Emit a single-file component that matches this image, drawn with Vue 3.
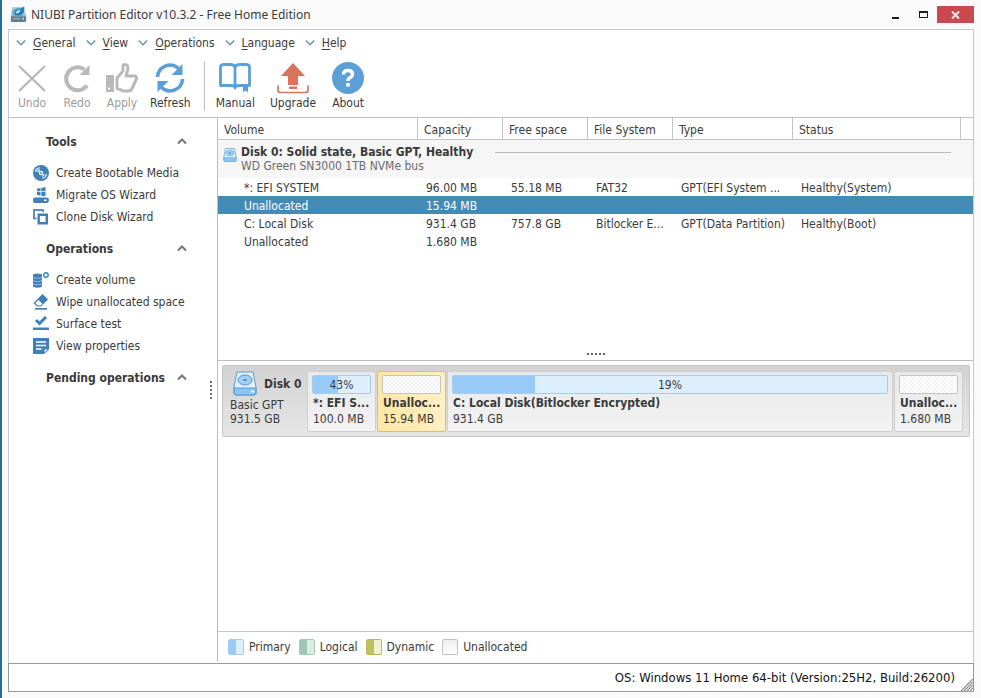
<script setup>
import { ref } from 'vue'

const menus = ['General', 'View', 'Operations', 'Language', 'Help']

const columns = ['Volume', 'Capacity', 'Free space', 'File System', 'Type', 'Status', '']
const volumes = [
  ['*: EFI SYSTEM', '96.00 MB', '55.18 MB', 'FAT32', 'GPT(EFI System ...', 'Healthy(System)', ''],
  ['Unallocated', '15.94 MB', '', '', '', '', ''],
  ['C: Local Disk', '931.4 GB', '757.8 GB', 'Bitlocker E...', 'GPT(Data Partition)', 'Healthy(Boot)', ''],
  ['Unallocated', '1.680 MB', '', '', '', '', '']
]
const selected = ref(1)

const partitions = [
  { name: '*: EFI S...', size: '100.0 MB', used: 43 },
  { name: 'Unalloc...', size: '15.94 MB' },
  { name: 'C: Local Disk(Bitlocker Encrypted)', size: '931.4 GB', used: 19, wide: true },
  { name: 'Unalloc...', size: '1.680 MB' }
]

const legend = [
  { label: 'Primary', kind: 'primary' },
  { label: 'Logical', kind: 'logical' },
  { label: 'Dynamic', kind: 'dynamic' },
  { label: 'Unallocated', kind: 'free' }
]
</script>

<template>
  <div class="window">
    <header class="titlebar">
      <svg class="app-icon" width="17" height="17" viewBox="0 0 18 18">
        <path d="M3 1h11l3 9v5q0 2-2 2H3q-2 0-2-2v-5z" fill="#7f99a8" />
        <path d="M3 1h11l3 9H1z" fill="#b8cfdb" />
        <path d="M1 11.500h16V15q0 2-2 2H3q-2 0-2-2z" fill="#5f7d90" />
        <ellipse cx="8.500" cy="6.500" rx="6" ry="4.500" fill="#58a9d4" />
        <path d="M5 9q-1-5 6-6l4-2.500q1.500 6.500-4 9-3 1-6-.5z" fill="#2380b4" />
        <path d="M6 7.500q2-3.500 5-3.500-1 4.500-5 3.500z" fill="#d9f2ff" />
        <path d="M3 13.500h8" stroke="#a9bfcc" />
        <circle cx="14" cy="13.500" r="1" fill="#c5e8f7" />
      </svg>
      <h1>NIUBI Partition Editor v10.3.2 - Free Home Edition</h1>
      <div class="controls">
        <button class="ctl" aria-label="Minimize">
          <svg width="9" height="11" viewBox="0 0 9 11"><path d="M1 8h7v2H1z" fill="#1b1b1b" /></svg>
        </button>
        <button class="ctl" aria-label="Maximize">
          <svg width="9" height="7" viewBox="0 0 9 7"><path d="M0 0h9v7H0zM1 2v4h7V2z" fill="#1b1b1b" fill-rule="evenodd" /></svg>
        </button>
        <button class="ctl close" aria-label="Close">
          <svg width="9" height="8" viewBox="0 0 9 8"><path d="M1 .5l7 7M8 .5l-7 7" stroke="#fbe9e9" stroke-width="2" /></svg>
        </button>
      </div>
    </header>

    <div class="frame">
      <nav class="menubar">
        <button v-for="m in menus" :key="m" class="menu">
          <svg width="10" height="7" viewBox="0 0 10 7"><path d="M.8 .5L5 4.800 9.200 .5" fill="none" stroke="#6f97a8" stroke-width="1.500" /></svg>
          <span><u>{{ m[0] }}</u>{{ m.slice(1) }}</span>
        </button>
      </nav>

      <div class="toolbar">
        <button class="tool" disabled>
          <svg width="34" height="34" viewBox="0 0 34 34"><path d="M4 5l26 25M30 5L4 30" stroke="#b9b9b9" stroke-width="2.400" /></svg>
          <span>Undo</span>
        </button>
        <button class="tool" disabled>
          <svg width="34" height="34" viewBox="0 0 34 34">
            <path d="M27 24.500A11.500 11.500 0 1 1 24.500 8.500" fill="none" stroke="#b9b9b9" stroke-width="4" />
            <path d="M29.500 4v10H19.500z" fill="#b9b9b9" />
          </svg>
          <span>Redo</span>
        </button>
        <button class="tool" disabled>
          <svg width="34" height="34" viewBox="0 0 34 34">
            <path d="M1 14h8v17H1zM3 26.500v2h2v-2z" fill="#b9b9b9" fill-rule="evenodd" />
            <path d="M12 27.500V17l6-7V4.500q0-1 2-1 3 0 3 4.500l-2 7h9q2.500 1 1 4l-4 8.500q-.8 2.500-3 2.500h-6q-2-1.500-6-2.500z" fill="none" stroke="#b9b9b9" stroke-width="3" stroke-linejoin="round" />
          </svg>
          <span>Apply</span>
        </button>
        <button class="tool">
          <svg width="34" height="34" viewBox="0 0 34 34">
            <path d="M4.500 16A12.500 12.500 0 0 1 25.500 7.500M29.500 18A12.500 12.500 0 0 1 8.500 26.500" fill="none" stroke="#5b9fd6" stroke-width="3.600" />
            <path d="M29.500 3v11H18.500zM4.500 31V20h11z" fill="#5b9fd6" />
          </svg>
          <span>Refresh</span>
        </button>
        <div class="separator"></div>
        <div class="tool-group">
          <button class="tool">
            <svg width="34" height="34" viewBox="0 0 34 34">
              <path d="M2.500 24.500V6q0-2.500 4-2.500h5q5.500 0 5.500 3.500 0-3.500 5.500-3.500h5q4 0 4 2.500v18.500h-9q-5.500 0-5.500 2.500 0-2.500-5.500-2.500zM17 7v20" fill="none" stroke="#5b9fd6" stroke-width="2.800" stroke-linejoin="round" />
              <path d="M25 25h5v6.500l-2.500-2-2.500 2z" fill="#5b9fd6" />
            </svg>
            <span>Manual</span>
          </button>
          <button class="tool">
            <svg width="34" height="34" viewBox="0 0 34 34">
              <path d="M17 2l12 13h-7v9H12v-9H5zM13 25.500h8v2.500h-8z" fill="#d9735c" />
              <path d="M2 24.500v4.500q0 2.500 2.500 2.500h25q2.500 0 2.500-2.500v-4.500" fill="none" stroke="#d9735c" stroke-width="1.700" />
            </svg>
            <span>Upgrade</span>
          </button>
          <button class="tool">
            <svg width="34" height="34" viewBox="0 0 34 34">
              <circle cx="17" cy="17" r="16" fill="#5b9fd6" />
              <path d="M12.500 13.500q0-4 4.500-4t4.500 3.700q0 2-2.300 3.400-2.200 1.200-2.200 3.400" fill="none" stroke="#fff" stroke-width="3.400" />
              <path d="M15.200 22h3.600v3.600h-3.600z" fill="#fff" />
            </svg>
            <span>About</span>
          </button>
        </div>
      </div>

      <div class="body">
        <aside class="sidebar">
          <section>
            <button class="group"><span>Tools</span><svg width="10" height="8" viewBox="0 0 10 8"><path d="M1 5.500L5 1.500l4 4" fill="none" stroke="#757575" stroke-width="2" /></svg></button>
            <ul>
              <li><button class="action">
                <svg width="16" height="16" viewBox="0 0 16 16">
                  <circle cx="8" cy="8" r="8" fill="#3d80ba" />
                  <circle cx="8" cy="8" r="2.200" fill="#fff" /><circle cx="8" cy="8" r=".9" fill="#3d80ba" />
                  <path d="M2.500 7A5.500 5.500 0 0 1 6.500 2.600M4.600 7.200A3.500 3.500 0 0 1 7 4.700M13.500 9A5.500 5.500 0 0 1 9.500 13.400M11.400 8.800A3.500 3.500 0 0 1 9 11.300" fill="none" stroke="#e6f1fa" stroke-width="1.200" />
                </svg>
                <span>Create Bootable Media</span>
              </button></li>
              <li><button class="action">
                <svg width="16" height="16" viewBox="0 0 16 16">
                  <path d="M4 1.800L7.500 1v3.200H4zM8.300.9L12.500 0v4.200H8.300zM4 5h3.500v3.600L4 8zM8.300 5h4.200v4.300l-4.200-.6z" fill="#3d80ba" />
                  <path d="M2 10.500h12q2 0 2 2.700T14 16H2q-2 0-2-2.800t2-2.700zM11 12.500v1.500h2.500v-1.500z" fill="#3d80ba" fill-rule="evenodd" />
                </svg>
                <span>Migrate OS Wizard</span>
              </button></li>
              <li><button class="action">
                <svg width="16" height="16" viewBox="0 0 16 16">
                  <path d="M3.500 9.500H1V1h9v2" fill="none" stroke="#5c91bf" stroke-width="2" />
                  <path d="M5.700 5.700h8.100v8.600H5.700z" fill="#fff" stroke="#3d80ba" stroke-width="2.400" />
                </svg>
                <span>Clone Disk Wizard</span>
              </button></li>
            </ul>
          </section>
          <section>
            <button class="group"><span>Operations</span><svg width="10" height="8" viewBox="0 0 10 8"><path d="M1 5.500L5 1.500l4 4" fill="none" stroke="#757575" stroke-width="2" /></svg></button>
            <ul>
              <li><button class="action">
                <svg width="16" height="16" viewBox="0 0 16 16">
                  <path d="M0 3q0-1.500 4.500-1.500T9 3v11q0 1.700-4.500 1.700T0 14z" fill="#3d80ba" />
                  <path d="M0 5.500q4.500 1.800 9 0M0 8.800q4.500 1.800 9 0M0 12q4.500 1.800 9 0" fill="none" stroke="#a9cae5" stroke-width=".8" />
                  <circle cx="13" cy="3" r="2.200" fill="#fff" stroke="#3d80ba" stroke-width="1.400" />
                </svg>
                <span>Create volume</span>
              </button></li>
              <li><button class="action">
                <svg width="16" height="16" viewBox="0 0 16 16">
                  <path d="M9.500 0L15 5.500 8 12.500H4L.5 9z" fill="#3d80ba" />
                  <path d="M5.500 6l4 4-2 1.500H4.600L2.300 9z" fill="#fff" />
                  <path d="M2 14h12v1.700H2z" fill="#3d80ba" />
                </svg>
                <span>Wipe unallocated space</span>
              </button></li>
              <li><button class="action">
                <svg width="16" height="16" viewBox="0 0 16 16">
                  <path d="M3 4l3.500 3.500L13 1" fill="none" stroke="#3d80ba" stroke-width="3" />
                  <path d="M0 11.500h16V14H0z" fill="#3d80ba" />
                </svg>
                <span>Surface test</span>
              </button></li>
              <li><button class="action">
                <svg width="16" height="16" viewBox="0 0 16 16">
                  <path d="M0 0h16v11l-5 5H0z" fill="#3d80ba" />
                  <path d="M3 4h10M3 7.500h10M3 11h5.500" stroke="#fff" stroke-width="1.400" />
                  <path d="M11 15.500V11h4.500z" fill="#fff" stroke="#3d80ba" />
                </svg>
                <span>View properties</span>
              </button></li>
            </ul>
          </section>
          <section>
            <button class="group"><span>Pending operations</span><svg width="10" height="8" viewBox="0 0 10 8"><path d="M1 5.500L5 1.500l4 4" fill="none" stroke="#757575" stroke-width="2" /></svg></button>
          </section>
          <svg class="grip" width="2" height="18" viewBox="0 0 2 18"><path d="M1 0v18" stroke="#6e6e6e" stroke-width="2" stroke-dasharray="2 2" /></svg>
        </aside>

        <main class="content">
          <div class="list">
            <table>
              <colgroup>
                <col class="c-volume" /><col class="c-short" /><col class="c-short" /><col class="c-short" />
                <col class="c-type" /><col class="c-status" /><col />
              </colgroup>
              <thead>
                <tr><th v-for="(c, i) in columns" :key="i" scope="col">{{ c }}</th></tr>
              </thead>
              <tbody>
                <tr class="disk-row">
                  <td colspan="7">
                    <div class="disk-head">
                      <svg width="14" height="14" viewBox="0 0 24 25">
                        <path d="M4 1h16l3 15v6q0 2-2 2H3q-2 0-2-2v-6z" fill="#e4f2fd" stroke="#6fa9da" stroke-width="1.600" />
                        <path d="M1 17h22v5q0 2-2 2H3q-2 0-2-2z" fill="#8cc4f3" stroke="#6fa9da" />
                        <ellipse cx="12" cy="9" rx="7" ry="5" fill="#a4d0f5" stroke="#5e9fd3" />
                        <ellipse cx="12" cy="9" rx="2" ry="1.500" fill="#4f92c9" />
                      </svg>
                      <div>
                        <strong>Disk 0: Solid state, Basic GPT, Healthy</strong>
                        <small>WD Green SN3000 1TB NVMe bus</small>
                      </div>
                      <hr />
                    </div>
                  </td>
                </tr>
                <tr v-for="(v, i) in volumes" :key="i" :class="{ selected: i === selected }" @click="selected = i">
                  <td v-for="(cell, j) in v" :key="j">{{ cell }}</td>
                </tr>
              </tbody>
            </table>
            <svg class="splitter" width="18" height="2" viewBox="0 0 18 2"><path d="M0 1h18" stroke="#666" stroke-width="2" stroke-dasharray="2 2" /></svg>
          </div>

          <div class="map">
            <div class="disk">
              <div class="disk-info">
                <div class="disk-name">
                  <svg width="24" height="25" viewBox="0 0 24 25">
                    <path d="M4 1h16l3 15v6q0 2-2 2H3q-2 0-2-2v-6z" fill="#e4f2fd" stroke="#5b9bd0" />
                    <path d="M1 17h22v5q0 2-2 2H3q-2 0-2-2z" fill="#8cc4f3" stroke="#5b9bd0" />
                    <ellipse cx="12" cy="9" rx="7" ry="5" fill="#a4d0f5" stroke="#4f92c9" />
                    <ellipse cx="12" cy="9" rx="2" ry="1.300" fill="#4f92c9" />
                    <path d="M18 20.500h3" stroke="#fff" stroke-width="2" />
                  </svg>
                  <strong>Disk 0</strong>
                </div>
                <span>Basic GPT</span>
                <span>931.5 GB</span>
              </div>
              <button
                v-for="(p, i) in partitions"
                :key="i"
                class="part"
                :class="{ wide: p.wide, active: i === selected }"
                @click="selected = i"
              >
                <span class="bar" :class="{ free: p.used === undefined }">
                  <span v-if="p.used !== undefined" class="fill" :style="{ width: p.used + '%' }"></span>
                  <span v-if="p.used !== undefined" class="pct">{{ p.used }}%</span>
                </span>
                <strong>{{ p.name }}</strong>
                <span>{{ p.size }}</span>
              </button>
            </div>
          </div>

          <div class="legend">
            <span v-for="l in legend" :key="l.kind" class="key"><i :class="l.kind"></i>{{ l.label }}</span>
          </div>
        </main>
      </div>

      <footer class="status">
        <span>OS: Windows 11 Home 64-bit (Version:25H2, Build:26200)</span>
        <svg width="13" height="13" viewBox="0 0 13 13"><path d="M1 13L13 1M4 13l9-9M7 13l6-6M10 13l3-3" stroke="#8c8c8c" stroke-width="1.200" /></svg>
      </footer>
    </div>
  </div>
</template>

<style>
body {
  margin: 0;
}
</style>

<style scoped>
* {
  box-sizing: border-box;
}
.window {
  display: flex;
  flex-direction: column;
  min-height: 100vh;
  padding: 0 7px 6px 6px;
  border-left: 2px solid #286f97;
  background: #fafafa;
  color: #3a3a3a;
  font: 12px/16px 'DejaVu Sans Condensed', Tahoma, 'DejaVu Sans', sans-serif;
}
button {
  margin: 0;
  padding: 0;
  border: 0;
  background: none;
  color: inherit;
  font: inherit;
}
svg {
  display: block;
  flex: none;
}
.titlebar {
  display: flex;
  align-items: center;
  height: 29px;
  padding-left: 2px;
}
h1 {
  flex: 1;
  margin: 0 0 0 4px;
  font: 12px/16px 'Noto Sans', 'Open Sans', sans-serif;
}
.controls {
  display: flex;
  height: 17px;
}
.ctl {
  display: flex;
  align-items: center;
  justify-content: center;
  width: 28px;
}
.close {
  width: 37px;
  background: #c9494e;
}
.frame {
  display: flex;
  flex: 1;
  flex-direction: column;
  border: solid #c4c9ca;
  border-width: 1px 1px 0;
  background: #fff;
}
.menubar {
  display: flex;
  gap: 10px;
  padding: 5px 7px 0;
}
.menu {
  display: flex;
  align-items: center;
  gap: 7px;
}
u {
  text-underline-offset: 2px;
}
.toolbar {
  display: flex;
  gap: 11px;
  height: 67px;
  padding: 10px 6px 0;
  border-bottom: 1px solid #bdbdbd;
}
.tool-group {
  display: flex;
  gap: 15px;
}
.tool {
  display: flex;
  flex-direction: column;
  align-items: center;
  min-width: 34px;
  height: 50px;
}
.tool:disabled {
  color: #9b9b9b;
}
.separator {
  width: 1px;
  height: 50px;
  margin-left: 2px;
  background: #bdbdbd;
}
.body {
  display: flex;
  flex: 1;
}
.sidebar {
  position: relative;
  width: 209px;
  padding: 8px 30px 0 24px;
  border-right: 1px solid #bdbdbd;
}
.group {
  display: flex;
  align-items: center;
  justify-content: space-between;
  width: 141px;
  height: 32px;
  margin-left: 13px;
  font-weight: bold;
}
section {
  margin-bottom: 5px;
}
ul {
  margin: 0;
  padding: 4px 0 0;
  list-style: none;
}
.action {
  display: flex;
  align-items: center;
  gap: 7px;
  height: 22px;
  white-space: nowrap;
}
.grip {
  position: absolute;
  top: 50%;
  right: 5px;
  transform: translateY(-50%);
}
.content {
  display: flex;
  flex: 1;
  flex-direction: column;
  min-width: 0;
}
.list {
  display: flex;
  flex-direction: column;
  justify-content: space-between;
  height: 243px;
  border-bottom: 1px solid #bdbdbd;
}
.splitter {
  align-self: center;
  margin-bottom: 5px;
}
table {
  width: 100%;
  border-collapse: separate;
  border-spacing: 0;
  table-layout: fixed;
}
.c-volume {
  width: 200px;
}
.c-short {
  width: 85px;
}
.c-type {
  width: 120px;
}
.c-status {
  width: 168px;
}
th {
  height: 22px;
  padding: 2px 6px 0;
  border-right: 1px solid #c4c4c4;
  border-bottom: 1px solid #c4c4c4;
  font-weight: normal;
  text-align: left;
}
th:last-child {
  border-right: 0;
}
td {
  height: 18px;
  padding: 2px 6px 0 8px;
  overflow: hidden;
  text-overflow: ellipsis;
  white-space: nowrap;
}
td:first-child {
  padding-left: 26px;
}
.disk-row td {
  height: 38px;
  padding: 0 22px 0 5px;
  background: #f6f6f6;
}
.disk-head {
  display: flex;
  gap: 4px;
}
.disk-head svg {
  margin-top: 3px;
}
.disk-head strong,
.disk-head small {
  display: block;
  font-size: 12px;
  line-height: 14px;
}
.disk-head small {
  color: #6b6b6b;
}
.disk-head hr {
  flex: 1;
  height: 1px;
  margin: 7px 0 0 18px;
  border: 0;
  background: #bdbdbd;
}
.selected {
  background: #438bb4;
  color: #fff;
}
.map {
  flex: 1;
  padding: 4px 3px 0 4px;
}
.disk {
  display: flex;
  gap: 1px;
  height: 72px;
  padding: 5px 6px 4px 0;
  border: 1px solid #c6c6c6;
  border-radius: 2px;
  background: linear-gradient(#d2d2d2, #e6e6e6);
}
.disk-info {
  display: flex;
  flex-direction: column;
  width: 83px;
  padding-left: 7px;
  line-height: 14px;
}
.disk-name {
  display: flex;
  align-items: center;
  gap: 7px;
  margin: 0 0 2px 3px;
  white-space: nowrap;
}
.part {
  display: flex;
  flex: none;
  flex-direction: column;
  width: 69px;
  padding: 3px 4px;
  border: 1px solid #cfcfcf;
  border-radius: 2px;
  background: linear-gradient(#e9e9e9, #f2f2f2);
  text-align: left;
}
.part.wide {
  flex: 1;
}
.part strong {
  overflow: hidden;
  padding-left: 1px;
  text-overflow: ellipsis;
  white-space: nowrap;
}
.part > span:last-child {
  padding-left: 1px;
}
.part.active {
  border-color: #e3bd5e;
  background: linear-gradient(90deg, #fde7a5, #fff0c4);
}
.bar {
  position: relative;
  height: 19px;
  margin-bottom: 1px;
  border: 1px solid #a5cdea;
  border-radius: 2px;
  background: #ddeffd;
}
.bar.free {
  border-color: #c4c4c4;
  background: repeating-conic-gradient(#f3f3f3 0 25%, #fff 0 50%) 0 0 / 4px 4px;
}
.fill {
  position: absolute;
  inset: 0 auto 0 0;
  background: #99cbf8;
}
.pct {
  position: relative;
  display: block;
  line-height: 19px;
  text-align: center;
}
.legend {
  display: flex;
  gap: 8px;
  height: 31px;
  padding: 7px 10px;
  border-top: 1px solid #c4c4c4;
}
.key {
  display: flex;
  gap: 5px;
}
.key i {
  width: 16px;
  height: 16px;
  border: 1px solid #c0c0c0;
  border-radius: 2px;
}
.key .primary {
  border-color: #a5cdea;
  background: linear-gradient(90deg, #99cbf8 50%, #ddeffd 50%);
}
.key .logical {
  border-color: #a3c7b8;
  background: linear-gradient(90deg, #9dc8b6 50%, #dcebe5 50%);
}
.key .dynamic {
  border-color: #b3b956;
  background: linear-gradient(90deg, #bcc35c 50%, #eff1d2 50%);
}
.key .free {
  background: linear-gradient(#eee, #fff);
}
.status {
  display: flex;
  align-items: flex-end;
  justify-content: flex-end;
  gap: 5px;
  height: 29px;
  margin: 1px -1px 0;
  border: 1px solid #989898;
  color: #111;
  font-size: 13px;
}
.status span {
  padding-bottom: 5px;
}
</style>
